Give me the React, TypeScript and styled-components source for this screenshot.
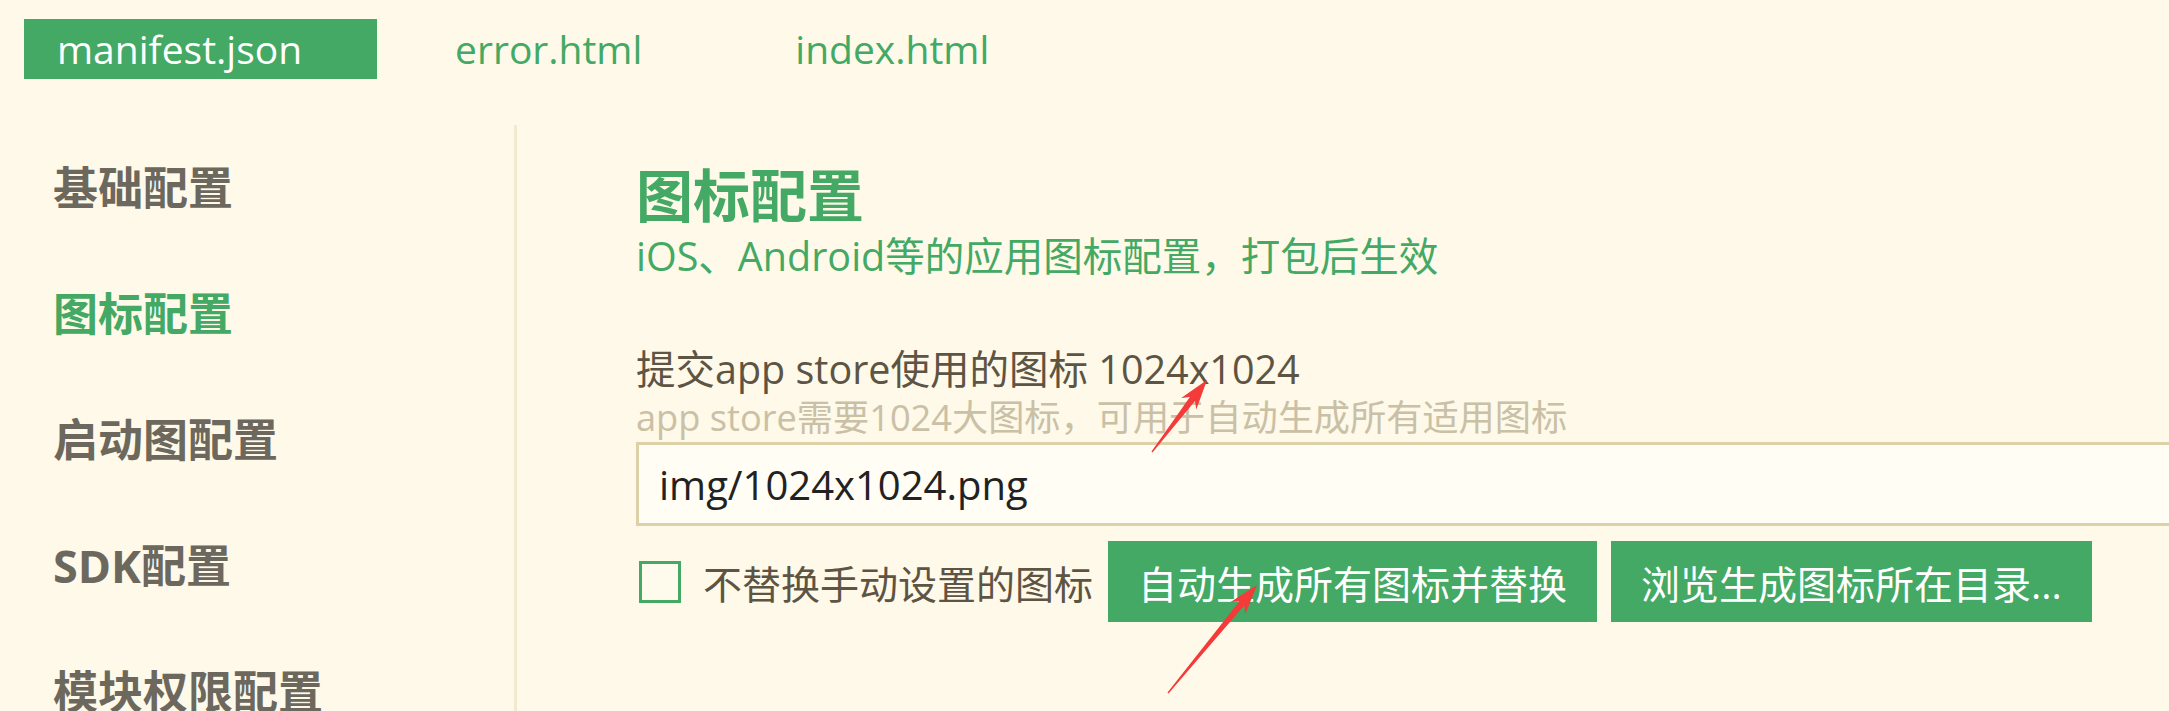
import React from 'react';
import styled, { createGlobalStyle } from 'styled-components';

const GREEN = '#43a964';

const GlobalStyle = createGlobalStyle`
  html, body {
    margin: 0;
    padding: 0;
    background: #fef9e8;
  }
  body {
    font-family: "Open Sans", "Noto Sans CJK SC", sans-serif;
    overflow: hidden;
  }
`;

const Page = styled.div`
  position: relative;
  width: 2169px;
  height: 711px;
  overflow: hidden;
  background: #fef9e8;
`;

const TabBar = styled.nav`
  display: flex;
  gap: 45px;
  padding: 19px 0 0 24px;
`;

const Tab = styled.div<{ $active?: boolean }>`
  height: 60px;
  line-height: 60px;
  padding: 0 75px 0 33px;
  font-size: 39px;
  color: ${(p) => (p.$active ? '#ffffff' : GREEN)};
  background: ${(p) => (p.$active ? GREEN : 'transparent')};
`;

const Body = styled.div`
  display: flex;
  margin-top: 46px;
  height: 600px;
`;

const Sidebar = styled.aside`
  width: 514px;
  flex-shrink: 0;
`;

const SideItem = styled.div<{ $active?: boolean }>`
  height: 126px;
  line-height: 126px;
  padding-left: 53px;
  font-size: 45px;
  font-weight: 700;
  color: ${(p) => (p.$active ? GREEN : '#6c685e')};
`;

const Main = styled.main`
  flex: 1;
  border-left: 3px solid #f2e9cf;
  padding: 35px 0 0 119px;
  min-width: 0;
`;

const Title = styled.h1`
  margin: 0;
  font-size: 57px;
  line-height: 70px;
  font-weight: 700;
  color: ${GREEN};
`;

const Subtitle = styled.div`
  margin-top: 3px;
  font-size: 39.5px;
  line-height: 46px;
  color: ${GREEN};
`;

const FieldLabel = styled.div`
  margin-top: 67px;
  font-size: 39.5px;
  line-height: 46px;
  color: #5d5444;
`;

const Hint = styled.div`
  margin-top: 2px;
  font-size: 36.2px;
  line-height: 46px;
  color: #c9c0a6;
`;

const PathInput = styled.input`
  display: block;
  box-sizing: border-box;
  width: calc(100% + 40px);
  height: 84px;
  margin: 2px 0 0;
  padding: 0 0 0 20px;
  border: 3px solid #dcd1a9;
  background: #fffdf4;
  font-family: inherit;
  font-size: 40px;
  color: #222222;
  outline: none;
`;

const ActionRow = styled.div`
  display: flex;
  align-items: center;
  margin-top: 15px;
`;

const CheckBox = styled.span`
  display: inline-block;
  box-sizing: border-box;
  width: 42px;
  height: 42px;
  margin-left: 3px;
  border: 3px solid ${GREEN};
  background: #fffbec;
`;

const CheckText = styled.span`
  margin-left: 22px;
  font-size: 39px;
  color: #5d5444;
`;

const Buttons = styled.div`
  display: flex;
  gap: 14px;
  margin-left: 15px;
`;

const Button = styled.button`
  height: 81px;
  padding: 0 30px;
  border: none;
  background: ${GREEN};
  color: #ffffff;
  font-family: inherit;
  font-size: 39px;
  white-space: nowrap;
`;

const Overlay = styled.svg`
  position: absolute;
  left: 0;
  top: 0;
  pointer-events: none;
`;

function arrowPoints(x1: number, y1: number, x2: number, y2: number) {
  const dx = x2 - x1;
  const dy = y2 - y1;
  const len = Math.hypot(dx, dy);
  const ux = dx / len;
  const uy = dy / len;
  const nx = -uy;
  const ny = ux;
  const local: [number, number][] = [
    [0, -0.6],
    [len - 24, -3.2],
    [len - 30, -9.5],
    [len, 0],
    [len - 30, 9.5],
    [len - 24, 3.2],
    [0, 0.6],
  ];
  return local
    .map(([a, b]) => `${(x1 + ux * a + nx * b).toFixed(1)},${(y1 + uy * a + ny * b).toFixed(1)}`)
    .join(' ');
}

const arrows = [
  { from: [1152, 452], to: [1207, 380] },
  { from: [1168, 693], to: [1257, 585] },
];

const sideItems = ['基础配置', '图标配置', '启动图配置', 'SDK配置', '模块权限配置'];

export default function App() {
  return (
    <Page>
      <GlobalStyle />
      <TabBar>
        <Tab $active>manifest.json</Tab>
        <Tab>error.html</Tab>
        <Tab>index.html</Tab>
      </TabBar>
      <Body>
        <Sidebar>
          {sideItems.map((item) => (
            <SideItem key={item} $active={item === '图标配置'}>
              {item}
            </SideItem>
          ))}
        </Sidebar>
        <Main>
          <Title>图标配置</Title>
          <Subtitle>iOS、Android等的应用图标配置，打包后生效</Subtitle>
          <FieldLabel>提交app store使用的图标 1024x1024</FieldLabel>
          <Hint>app store需要1024大图标，可用于自动生成所有适用图标</Hint>
          <PathInput defaultValue="img/1024x1024.png" readOnly />
          <ActionRow>
            <CheckBox />
            <CheckText>不替换手动设置的图标</CheckText>
            <Buttons>
              <Button>自动生成所有图标并替换</Button>
              <Button>浏览生成图标所在目录...</Button>
            </Buttons>
          </ActionRow>
        </Main>
      </Body>
      <Overlay width={2169} height={711}>
        {arrows.map((a, i) => (
          <polygon key={i} points={arrowPoints(a.from[0], a.from[1], a.to[0], a.to[1])} fill="#f53a3a" />
        ))}
      </Overlay>
    </Page>
  );
}
